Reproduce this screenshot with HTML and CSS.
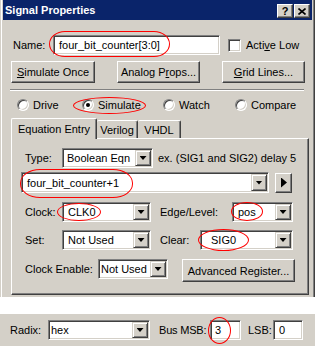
FILE: index.html
```html
<!DOCTYPE HTML>
<html>
  <head>
    <meta http-equiv="content-type" content="text/html; charset=utf-8">
    <title>Signal Properties</title>
    <link rel="stylesheet" href="styles.css">
  </head>
  <body>
    <div class="page">
      <div class="window">
        <div class="titlebar">
          <span class="title">Signal Properties</span>
          <div class="caption-btns">
            <span class="cbtn help">?</span>
            <span class="cbtn close">
              <svg width="8" height="7" viewBox="0 0 8 7"><path d="M0.5 0.5 L7.5 6.5 M7.5 0.5 L0.5 6.5" stroke="#000" stroke-width="1.6"/></svg>
            </span>
          </div>
        </div>

        <div class="content">
          <div class="name-row">
            <span class="name-label">Name:</span>
            <div class="field name-field"><span class="val">four_bit_counter[3:0]</span></div>
            <span class="check"></span>
            <span class="check-label">Acti<u>v</u>e Low</span>
          </div>

          <div class="btn-row">
            <span class="btn w84"><u>S</u>imulate Once</span>
            <span class="btn w83">Analog P<u>r</u>ops...</span>
            <span class="btn w83"><u>G</u>rid Lines...</span>
          </div>

          <div class="sep"></div>

          <div class="radio-row">
            <span class="radio-item w65"><span class="radio"></span>Drive</span>
            <span class="radio-item w81"><span class="radio on"></span>Simulate</span>
            <span class="radio-item w72"><span class="radio"></span>Watch</span>
            <span class="radio-item"><span class="radio"></span>Compare</span>
          </div>

          <div class="tabs">
            <span class="tab active">Equation Entry</span>
            <span class="tab t-verilog">Verilog</span>
            <span class="tab t-vhdl">VHDL</span>
          </div>

          <div class="panel">
            <div class="prow">
              <span class="plabel">Type:</span>
              <div class="field sel w91"><span class="val pad4">Boolean Eqn</span><span class="drop"></span></div>
              <span class="hint">ex. (SIG1 and SIG2) delay 5</span>
            </div>

            <div class="prow eq-row">
              <div class="field eq-field"><span class="val pad6">four_bit_counter+1</span><span class="drop"></span></div>
              <span class="play"></span>
            </div>

            <div class="prow r-clock">
              <span class="plabel">Clock:</span>
              <div class="field sel w89"><span class="val pad6">CLK0</span><span class="drop"></span></div>
              <span class="plabel edge-label">Edge/Level:</span>
              <div class="field sel w61"><span class="val pad6">pos</span><span class="drop"></span></div>
            </div>

            <div class="prow r-set">
              <span class="plabel">Set:</span>
              <div class="field sel w89"><span class="val pad6">Not Used</span><span class="drop"></span></div>
              <span class="plabel clear-label">Clear:</span>
              <div class="field sel w93"><span class="val pad10">SIG0</span><span class="drop"></span></div>
            </div>

            <div class="prow r-ce">
              <span class="plabel ce-label">Clock Enable:</span>
              <div class="field sel w70"><span class="val pad1">Not Used</span><span class="drop"></span></div>
              <span class="btn adv">Advanced Register...</span>
            </div>
          </div>
        </div>
      </div>

      <div class="bottom">
        <span class="radix-label">Radix:</span>
        <div class="field sel w102"><span class="val pad1">hex</span><span class="drop"></span></div>
        <span class="msb-label">Bus MSB:</span>
        <div class="field w31"><span class="val pad4">3</span></div>
        <span class="lsb-label">LSB:</span>
        <div class="field w30"><span class="val pad5">0</span></div>
      </div>

      <!-- red annotation marks -->
      <span class="mark m-name"></span>
      <span class="mark m-sim"></span>
      <span class="mark m-eq"></span>
      <span class="mark m-clk"></span>
      <span class="mark m-pos"></span>
      <span class="mark m-sig"></span>
      <span class="mark m-msb"></span>
    </div>
  </body>
</html>
```

FILE: styles.css
```css
body{margin:0; padding:0; background:#fff; color:#000; font-family:"Liberation Sans", Arial, sans-serif; font-size:11px;}
.page{position:relative; width:315px; height:346px; overflow:hidden; white-space:nowrap;}

/* window frame */
.window{height:297px; box-sizing:border-box; background:#d4d0c8; border-left:1px solid #d4d0c8; border-right:1px solid #404040; padding:0 2px; box-shadow:inset 1px 0 #fff, inset -1px 0 #808080;}
.titlebar{display:flex; align-items:flex-start; height:20px; background:#0a246a; color:#fff;}
.title{font-weight:bold; padding-left:2px; line-height:21px;}
.caption-btns{display:flex; gap:1px; margin:4px 2px 0 auto;}
.cbtn{width:16px; height:14px; box-sizing:border-box; display:flex; align-items:center; justify-content:center; background:#d4d0c8; color:#000; border:1px solid; border-color:#fff #404040 #404040 #fff; box-shadow:inset -1px -1px #808080;}
.cbtn.help{font-weight:bold; font-size:11px; line-height:12px;}

.content{padding-left:8px;}

/* sunken fields */
.field{box-sizing:border-box; height:20px; flex-shrink:0; display:flex; align-items:center; background:#fff; border:1px solid; border-color:#808080 #fff #fff #808080; box-shadow:inset 1px 1px #404040, inset -1px -1px #d4d0c8; padding:1px;}
.field .val{flex:1; overflow:hidden;}
.pad1{padding-left:1px;} .pad4{padding-left:3px;} .pad5{padding-left:4px;} .pad6{padding-left:4px;} .pad10{padding-left:9px;}
.drop{align-self:stretch; width:16px; box-sizing:border-box; display:flex; align-items:center; justify-content:center; background:#d4d0c8; border:1px solid; border-color:#d4d0c8 #404040 #404040 #d4d0c8; box-shadow:inset 1px 1px #fff, inset -1px -1px #808080;}
.drop::after{content:""; width:7px; height:4px; background:#000; clip-path:polygon(0 0, 100% 0, 50% 100%);}

/* raised buttons */
.btn{box-sizing:border-box; height:22px; flex-shrink:0; display:flex; align-items:center; justify-content:center; background:#d4d0c8; border:1px solid; border-color:#fff #404040 #404040 #fff; box-shadow:inset -1px -1px #808080;}

.w30{width:30px;} .w31{width:31px;} .w61{width:61px;} .w65{width:65px;} .w70{width:70px;} .w72{width:72px;}
.w81{width:81px;} .w83{width:83px;} .w84{width:84px;} .w89{width:89px;} .w91{width:91px;} .w93{width:93px;} .w102{width:102px;}

/* name row */
.name-row{display:flex; align-items:center; height:20px; margin-top:15px;}
.name-label{width:40px; margin-left:2px;}
.name-field{width:167px;}
.name-field .val{padding-left:4px;}
.check{width:13px; height:13px; box-sizing:border-box; margin-left:8px; background:#fff; border:1px solid; border-color:#808080 #fff #fff #808080; box-shadow:inset 1px 1px #404040, inset -1px -1px #d4d0c8;}
.check-label{margin-left:5px;}

.btn-row{display:flex; gap:22px; margin-top:6px;}

.sep{width:294px; margin:6px 0 0 -1px; border-top:1px solid #808080; border-bottom:1px solid #fff;}

/* radios */
.radio-row{display:flex; align-items:center; height:14px; margin-top:7px; padding-left:6px;}
.radio-item{display:flex; align-items:center; gap:4px; flex-shrink:0;}
.radio{position:relative; width:12px; height:12px; box-sizing:border-box; border-radius:50%; background:#fff; border:1px solid; border-color:#808080 #fff #fff #808080; box-shadow:inset 1px 1px #404040, inset -1px -1px #d4d0c8;}
.radio.on::after{content:""; position:absolute; left:3px; top:3px; width:4px; height:4px; border-radius:50%; background:#000;}

/* tabs */
.tabs{display:flex; align-items:flex-end; height:20px; margin-top:6px; position:relative; z-index:1;}
.tab{box-sizing:border-box; height:18px; display:flex; align-items:center; justify-content:center; background:#d4d0c8; border-top:1px solid #fff; border-left:1px solid #fff; border-right:1px solid #404040; box-shadow:inset -1px 0 #808080; border-radius:2px 2px 0 0;}
.tab.active{width:86px; height:21px; margin-bottom:-1px; padding-bottom:1px;}
.t-verilog{width:41px; border-left:none;}
.t-vhdl{width:43px; border-left:none;}

/* tab panel */
.panel{width:298px; height:157px; box-sizing:border-box; border:1px solid; border-color:#fff #404040 #404040 #fff; box-shadow:inset -1px -1px #808080; padding:9px 0 0 13px;}
.prow{display:flex; align-items:center;}
.plabel{width:37px; flex-shrink:0;}
.hint{margin-left:5px;}
.eq-row{margin:4px 0 0 -4px;}
.eq-field{width:248px; height:21px;}
.play{width:17px; height:20px; margin-left:6px; box-sizing:border-box; display:flex; align-items:center; justify-content:center; background:#d4d0c8; border:1px solid; border-color:#fff #404040 #404040 #fff; box-shadow:inset -1px -1px #808080;}
.play::after{content:""; width:6px; height:10px; margin-left:1px; background:#000; clip-path:polygon(0 0, 100% 50%, 0 100%);}
.r-clock{margin-top:9px;}
.r-set{margin-top:8px;}
.r-ce{margin-top:9px; align-items:flex-start;}
.edge-label{width:72px; margin-left:9px;}
.clear-label{width:40px; margin-left:9px;}
.ce-label{width:73px; line-height:20px;}
.adv{width:113px; height:23px; margin-left:14px;}

/* bottom strip */
.bottom{display:flex; align-items:center; height:33px; box-sizing:border-box; margin-top:16px; padding:0 0 0 10px; background:#d4d0c8; border-top:1px solid #fff;}
.radix-label{width:38px; flex-shrink:0;}
.msb-label{width:51px; margin-left:9px; flex-shrink:0; letter-spacing:-0.2px;}
.lsb-label{width:25px; margin-left:7px; flex-shrink:0;}

/* red annotation ellipses */
.mark{position:absolute; box-sizing:border-box; border:1px solid #f00; border-radius:50%;}
.m-name{left:49px; top:31px; width:121px; height:26px; border-radius:16px / 13px;}
.m-sim{left:73px; top:97px; width:73px; height:17px;}
.m-eq{left:20px; top:169px; width:113px; height:29px; border-radius:20px / 14px;}
.m-clk{left:57px; top:203px; width:44px; height:18px;}
.m-pos{left:231px; top:202px; width:32px; height:19px;}
.m-sig{left:198px; top:229px; width:51px; height:22px;}
.m-msb{left:208px; top:317px; width:23px; height:27px;}
```
